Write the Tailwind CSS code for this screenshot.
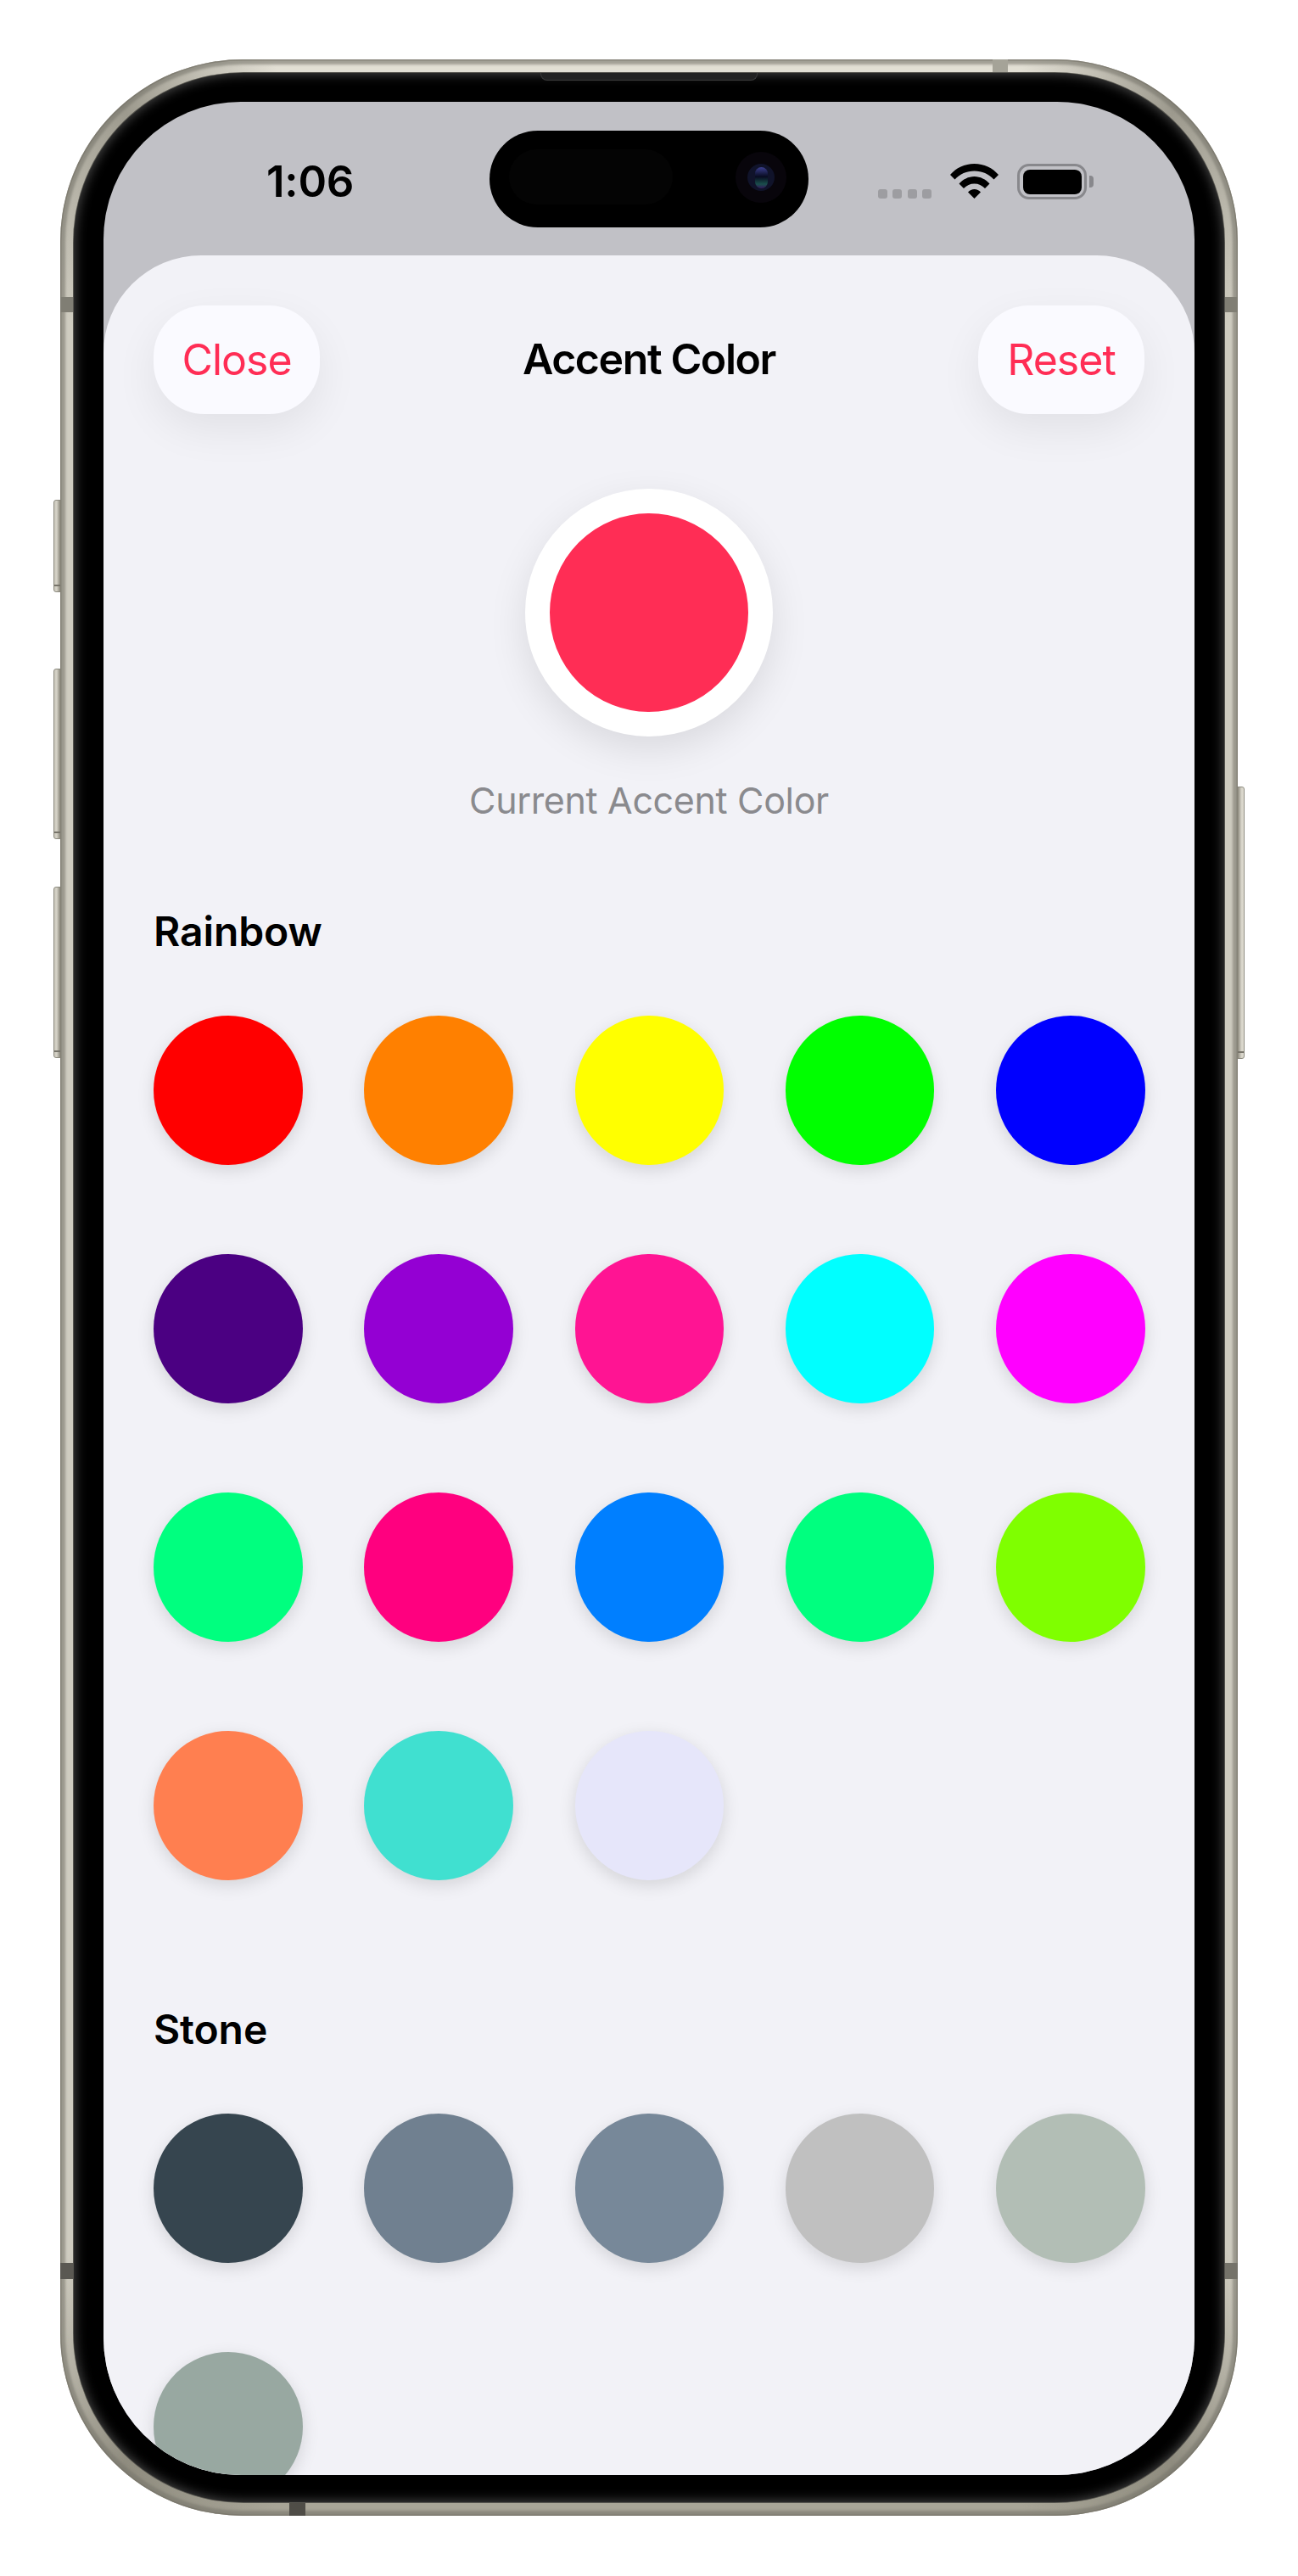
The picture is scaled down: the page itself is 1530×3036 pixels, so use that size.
<!DOCTYPE html>
<html>
<head>
<meta charset="utf-8">
<script src="https://cdn.jsdelivr.net/npm/@tailwindcss/browser@4"></script>
</head>
<body class="bg-white font-['Inter','Liberation_Sans',sans-serif]">
<div class="h-[3036px] w-[1530px] overflow-hidden pt-[70px]">
  <div class="relative mx-auto h-[2895px] w-[1388px]">
    <!-- side buttons -->
    <div class="absolute left-[-8px] top-[519px] h-[109px] w-[9px] rounded-l-[3px] border border-[#8d8b80] bg-[linear-gradient(90deg,#c9c6ba,#d6d3c8_40%,#8a877b)]"><div class="absolute inset-x-0 bottom-[6px] h-[2px] bg-[#77746a]"></div></div>
    <div class="absolute left-[-8px] top-[718px] h-[201px] w-[9px] rounded-l-[3px] border border-[#8d8b80] bg-[linear-gradient(90deg,#c9c6ba,#d6d3c8_40%,#8a877b)]"><div class="absolute inset-x-0 bottom-[6px] h-[2px] bg-[#77746a]"></div></div>
    <div class="absolute left-[-8px] top-[975px] h-[202px] w-[9px] rounded-l-[3px] border border-[#8d8b80] bg-[linear-gradient(90deg,#c9c6ba,#d6d3c8_40%,#8a877b)]"><div class="absolute inset-x-0 bottom-[6px] h-[2px] bg-[#77746a]"></div></div>
    <div class="absolute right-[-8px] top-[857px] h-[321px] w-[9px] rounded-r-[3px] border border-[#8d8b80] bg-[linear-gradient(270deg,#e0ddd2,#d6d3c8_40%,#8a877b)]"><div class="absolute inset-x-0 bottom-[6px] h-[2px] bg-[#77746a]"></div></div>

    <!-- titanium band -->
    <div class="relative h-full w-full rounded-[215px] bg-[conic-gradient(#e2dfd4_0deg,#e2dfd4_17deg,#9d9a8e_24deg,#cfccc0_31deg,#cfccc0_149deg,#8f8c7f_156deg,#a8a597_163deg,#a8a597_197deg,#8f8c7f_204deg,#cfccc0_211deg,#cfccc0_329deg,#9d9a8e_336deg,#e2dfd4_343deg,#e2dfd4_360deg)] p-[16px] shadow-[inset_0_0_0_1.5px_#75726690,inset_0_0_3px_6px_#77746a99]">
      <!-- antenna bands -->
      <div class="absolute left-0 top-[280px] h-[18px] w-[16px] bg-[#807e74]"></div>
      <div class="absolute right-0 top-[280px] h-[18px] w-[16px] bg-[#807e74]"></div>
      <div class="absolute bottom-[279px] left-0 h-[19px] w-[16px] bg-[#5a5852]"></div>
      <div class="absolute bottom-[279px] right-0 h-[19px] w-[16px] bg-[#75736a]"></div>
      <div class="absolute right-[271px] top-0 h-[17px] w-[18px] bg-[#a5a398]"></div>
      <div class="absolute bottom-0 left-[270px] h-[17px] w-[19px] bg-[#4f4d47]"></div>

      <!-- black bezel -->
      <div class="relative h-full w-full rounded-[200px] bg-black px-[35px] pb-[32px] pt-[34px] shadow-[0_0_0_1px_#55544e,inset_0_0_14px_1px_#4a4a4a]">
        <div class="absolute left-[550px] top-0 h-[9px] w-[256px] rounded-b-[8px] border-x border-b border-[#3a3a3a] bg-[#222222]"></div>

        <!-- screen -->
        <div class="relative flex h-full w-full flex-col overflow-hidden rounded-[162px] bg-[#c1c1c6]">
          <!-- dynamic island -->
          <div class="absolute left-[455px] top-[34px] h-[114px] w-[376px] rounded-full bg-black">
            <div class="absolute left-[23px] top-[22px] h-[65px] w-[193px] rounded-full bg-[#040404]"></div>
            <div class="absolute left-[290px] top-[25px] flex h-[60px] w-[60px] items-center justify-center rounded-full bg-[#08050b]">
              <div class="flex h-[32px] w-[32px] items-center justify-center rounded-full bg-[#10132a]">
                <div class="h-[25px] w-[15px] rounded-full bg-[linear-gradient(180deg,#3b3f8e,#080b20_45%,#1a4f4c_80%,#33175a)]"></div>
              </div>
            </div>
          </div>

          <!-- status bar -->
          <div class="flex h-[181px] shrink-0 items-start justify-between pl-[192px] pr-[119px] pt-[73px]">
            <div class="text-[51px] font-semibold leading-[42px] tracking-[-0.2px] text-black">1:06</div>
            <div class="flex h-[42px] items-end gap-[22px]">
              <div class="flex gap-[6.3px] pb-[1px]">
                <div class="h-[11px] w-[11px] rounded-[3px] bg-[#9d9da1]"></div>
                <div class="h-[11px] w-[11px] rounded-[3px] bg-[#9d9da1]"></div>
                <div class="h-[11px] w-[11px] rounded-[3px] bg-[#9d9da1]"></div>
                <div class="h-[11px] w-[11px] rounded-[3px] bg-[#9d9da1]"></div>
              </div>
              <svg class="mb-[1px] block h-[41px] w-[57px]" viewBox="0 0 57 41" fill="#000">
                <path d="M0 13C7 5 17 0 28.5 0C40 0 50 5 57 13L51.5 18.5C45.5 12 37.5 8.5 28.5 8.5C19.5 8.5 11.5 12 5.5 18.5Z"/>
                <path d="M10.5 23.5C15 18.5 21.5 15 28.5 15C35.5 15 42 18.5 46.5 23.5L41 29C37.5 25.5 33.5 23.5 28.5 23.5C23.5 23.5 19.5 25.5 16 29Z"/>
                <path d="M21 33.5C23 31.5 25.5 30 28.5 30C31.5 30 34 31.5 36 33.5L28.5 41Z"/>
              </svg>
              <div class="flex items-center gap-[3px]">
                <div class="h-[42px] w-[82px] rounded-[14px] border-[3.5px] border-[#88888c] p-[3.5px]">
                  <div class="h-full w-full rounded-[8px] bg-black"></div>
                </div>
                <div class="h-[14px] w-[5px] rounded-r-[4px] bg-[#88888c]"></div>
              </div>
            </div>
          </div>

          <!-- sheet -->
          <div class="flex-1 overflow-hidden rounded-t-[115px] bg-[#f2f2f7] px-[59px] pt-[59px]">
            <div class="flex h-[128px] items-center justify-between">
              <div class="flex h-[128px] w-[196px] items-center justify-center rounded-[60px] bg-[#fafaff] text-[50px] tracking-[-1px] text-[#ff2d55] shadow-[0_18px_50px_rgba(0,0,0,0.07)]">Close</div>
              <div class="mb-[3px] text-[50px] font-semibold leading-[60px] tracking-[-1.4px] text-black">Accent Color</div>
              <div class="flex h-[128px] w-[196px] items-center justify-center rounded-[60px] bg-[#fafaff] text-[50px] tracking-[-1px] text-[#ff2d55] shadow-[0_18px_50px_rgba(0,0,0,0.07)]">Reset</div>
            </div>

            <div class="mt-[88px] flex flex-col items-center">
              <div class="h-[292px] w-[292px] rounded-full border-[29px] border-white bg-[#ff2d55] shadow-[0_15px_45px_rgba(0,0,0,0.1)]"></div>
              <div class="mt-[48px] text-[43px] leading-[54px] tracking-[-0.35px] text-[#8a8a8e]">Current Accent Color</div>
            </div>

            <div class="mt-[98px] text-[48px] font-semibold leading-[60px] tracking-[-0.1px] text-black">Rainbow</div>
            <div class="mt-[69px] grid grid-cols-[repeat(5,175.5px)] gap-x-[72.75px] gap-y-[105px]">
              <div class="h-[176px] rounded-full bg-[#ff0000] shadow-[0_6px_20px_rgba(0,0,0,0.13)]"></div>
              <div class="h-[176px] rounded-full bg-[#ff8000] shadow-[0_6px_20px_rgba(0,0,0,0.13)]"></div>
              <div class="h-[176px] rounded-full bg-[#ffff00] shadow-[0_6px_20px_rgba(0,0,0,0.13)]"></div>
              <div class="h-[176px] rounded-full bg-[#00ff00] shadow-[0_6px_20px_rgba(0,0,0,0.13)]"></div>
              <div class="h-[176px] rounded-full bg-[#0000ff] shadow-[0_6px_20px_rgba(0,0,0,0.13)]"></div>
              <div class="h-[176px] rounded-full bg-[#4b0082] shadow-[0_6px_20px_rgba(0,0,0,0.13)]"></div>
              <div class="h-[176px] rounded-full bg-[#9400d3] shadow-[0_6px_20px_rgba(0,0,0,0.13)]"></div>
              <div class="h-[176px] rounded-full bg-[#ff1493] shadow-[0_6px_20px_rgba(0,0,0,0.13)]"></div>
              <div class="h-[176px] rounded-full bg-[#00ffff] shadow-[0_6px_20px_rgba(0,0,0,0.13)]"></div>
              <div class="h-[176px] rounded-full bg-[#ff00ff] shadow-[0_6px_20px_rgba(0,0,0,0.13)]"></div>
              <div class="h-[176px] rounded-full bg-[#00ff7f] shadow-[0_6px_20px_rgba(0,0,0,0.13)]"></div>
              <div class="h-[176px] rounded-full bg-[#ff007f] shadow-[0_6px_20px_rgba(0,0,0,0.13)]"></div>
              <div class="h-[176px] rounded-full bg-[#007fff] shadow-[0_6px_20px_rgba(0,0,0,0.13)]"></div>
              <div class="h-[176px] rounded-full bg-[#00ff7f] shadow-[0_6px_20px_rgba(0,0,0,0.13)]"></div>
              <div class="h-[176px] rounded-full bg-[#7fff00] shadow-[0_6px_20px_rgba(0,0,0,0.13)]"></div>
              <div class="h-[176px] rounded-full bg-[#ff7f50] shadow-[0_6px_20px_rgba(0,0,0,0.13)]"></div>
              <div class="h-[176px] rounded-full bg-[#40e0d0] shadow-[0_6px_20px_rgba(0,0,0,0.13)]"></div>
              <div class="h-[176px] rounded-full bg-[#e6e6fa] shadow-[0_6px_20px_rgba(0,0,0,0.13)]"></div>
            </div>

            <div class="mt-[146px] text-[48px] font-semibold leading-[60px] tracking-[-0.1px] text-black">Stone</div>
            <div class="mt-[69px] grid grid-cols-[repeat(5,175.5px)] gap-x-[72.75px] gap-y-[105px]">
              <div class="h-[176px] rounded-full bg-[#36454f] shadow-[0_6px_20px_rgba(0,0,0,0.13)]"></div>
              <div class="h-[176px] rounded-full bg-[#708090] shadow-[0_6px_20px_rgba(0,0,0,0.13)]"></div>
              <div class="h-[176px] rounded-full bg-[#778899] shadow-[0_6px_20px_rgba(0,0,0,0.13)]"></div>
              <div class="h-[176px] rounded-full bg-[#c0c0c0] shadow-[0_6px_20px_rgba(0,0,0,0.13)]"></div>
              <div class="h-[176px] rounded-full bg-[#b2beb5] shadow-[0_6px_20px_rgba(0,0,0,0.13)]"></div>
              <div class="h-[176px] rounded-full bg-[#98a8a1] shadow-[0_6px_20px_rgba(0,0,0,0.13)]"></div>
            </div>
          </div>
        </div>
      </div>
    </div>
  </div>
</div>
</body>
</html>
